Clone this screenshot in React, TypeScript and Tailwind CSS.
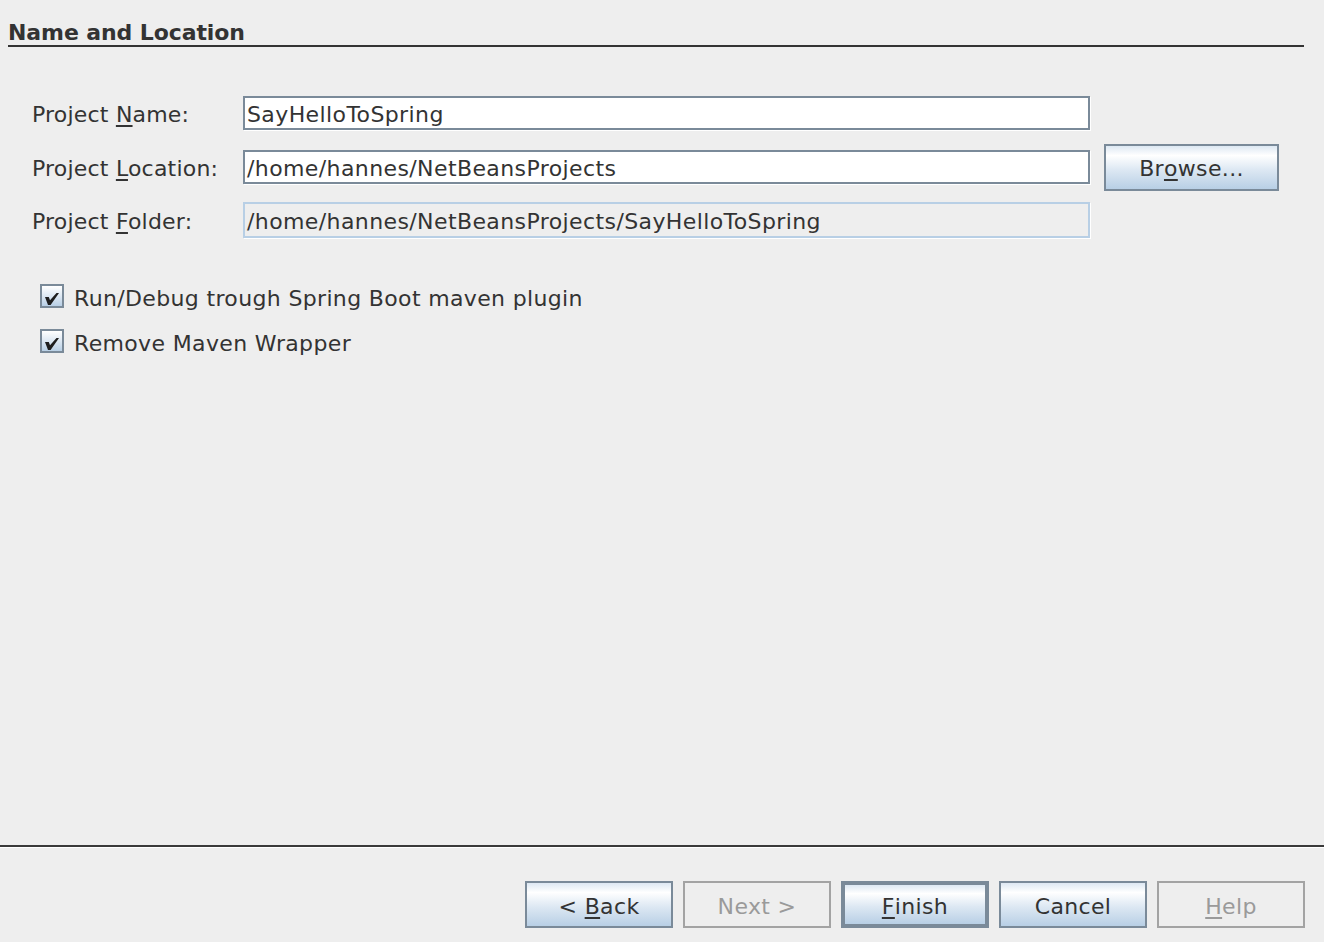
import React from "react";

const font = { fontFamily: '"DejaVu Sans", "Liberation Sans", sans-serif' };

function Btn({
  children,
  disabled,
  isDefault,
  className = "",
}: {
  children: React.ReactNode;
  disabled?: boolean;
  isDefault?: boolean;
  className?: string;
}) {
  if (disabled) {
    return (
      <div
        className={`flex items-center justify-center border-2 border-[#a3a3a3] bg-[#eeeeee] pt-[3px] text-[22px] tracking-[0.35px] text-[#9a9a9a] ${className}`}
      >
        {children}
      </div>
    );
  }
  return (
    <div
      className={`flex items-center justify-center ${isDefault ? "border-4" : "border-2"} border-[#7a8a99] bg-[linear-gradient(to_bottom,#dde8f3_0%,#ffffff_22%,#dde8f3_55%,#b8cfe5_100%)] pt-[3px] text-[22px] tracking-[0.35px] text-[#333333] ${className}`}
    >
      {children}
    </div>
  );
}

function Check({ label }: { label: string }) {
  return (
    <div className="flex h-[24px] items-center">
      <div className="flex h-[24px] w-[24px] items-center justify-center border-2 border-[#7a8a99] bg-[linear-gradient(to_bottom,#ffffff_0%,#dde8f3_50%,#b8cfe5_100%)]">
        <svg width="20" height="20" viewBox="0 0 20 20">
          <path d="M3 11 L6.8 11 L8 14.2 L14.5 7 L17 7 L8.6 19 L6 19 Z" fill="#1e1e1e" />
        </svg>
      </div>
      <span className="ml-[10px] pt-[5px] text-[22px] leading-[26px] tracking-[0.35px] text-[#333333]">{label}</span>
    </div>
  );
}

function Field({ value, readOnly, h = 34 }: { value: string; readOnly?: boolean; h?: number }) {
  return (
    <div
      className={`flex w-[847px] items-center pl-[2px] pt-[3px] text-[22px] leading-[26px] tracking-[0.4px] text-[#333333] shadow-[1px_1px_0_#ffffff] ${
        readOnly ? "border-2 border-[#b8cfe5] bg-[#eeeeee]" : "border-2 border-[#7a8a99] bg-white"
      } ${h === 34 ? "h-[34px]" : "h-[36px]"}`}
    >
      {value}
    </div>
  );
}

const U = ({ children }: { children: React.ReactNode }) => (
  <span className="underline decoration-2 underline-offset-[3px]">{children}</span>
);

const labelCls = "w-[211px] pt-[3px] text-[22px] leading-[26px] tracking-[0.2px] text-[#333333]";

export default function App() {
  return (
    <div className="flex h-[942px] w-[1324px] flex-col overflow-hidden bg-[#eeeeee]" style={font}>
      <div className="ml-[8px] mr-[20px] border-b-2 border-[#333333] pt-[20px]">
        <div className="h-[25px] text-[22px] font-bold leading-[26px] tracking-[-0.1px] text-[#333333]">
          Name and Location
        </div>
      </div>

      <div className="mt-[49px] flex flex-col gap-[20px] pl-[32px]">
        <div className="flex h-[34px] items-center">
          <div className={labelCls}>
            Project <U>N</U>ame:
          </div>
          <Field value="SayHelloToSpring" />
        </div>
        <div className="flex h-[34px] items-center">
          <div className={labelCls}>
            Project <U>L</U>ocation:
          </div>
          <Field value="/home/hannes/NetBeansProjects" />
          <Btn className="ml-[14px] h-[47px] w-[175px] shrink-0">
            Br<U>o</U>wse...
          </Btn>
        </div>
        <div className="-mt-[2px] flex h-[36px] items-center">
          <div className={labelCls}>
            Project <U>F</U>older:
          </div>
          <Field value="/home/hannes/NetBeansProjects/SayHelloToSpring" readOnly h={36} />
        </div>
      </div>

      <div className="mt-[46px] flex flex-col gap-[21px] pl-[40px]">
        <Check label="Run/Debug trough Spring Boot maven plugin" />
        <Check label="Remove Maven Wrapper" />
      </div>

      <div className="flex-1" />

      <div className="h-[2px] bg-[#3a3a3a]" />
      <div className="h-[1px] bg-white" />
      <div className="flex justify-end gap-[10px] pt-[33px] pb-[14px] pr-[19px]">
        <Btn className="h-[47px] w-[148px]">
          <span className="whitespace-pre">{"< "}</span>
          <U>B</U>ack
        </Btn>
        <Btn disabled className="h-[47px] w-[148px]">
          <span className="whitespace-pre">{"Next >"}</span>
        </Btn>
        <Btn isDefault className="h-[47px] w-[148px]">
          <U>F</U>inish
        </Btn>
        <Btn className="h-[47px] w-[148px]">Cancel</Btn>
        <Btn disabled className="h-[47px] w-[148px]">
          <U>H</U>elp
        </Btn>
      </div>
    </div>
  );
}
